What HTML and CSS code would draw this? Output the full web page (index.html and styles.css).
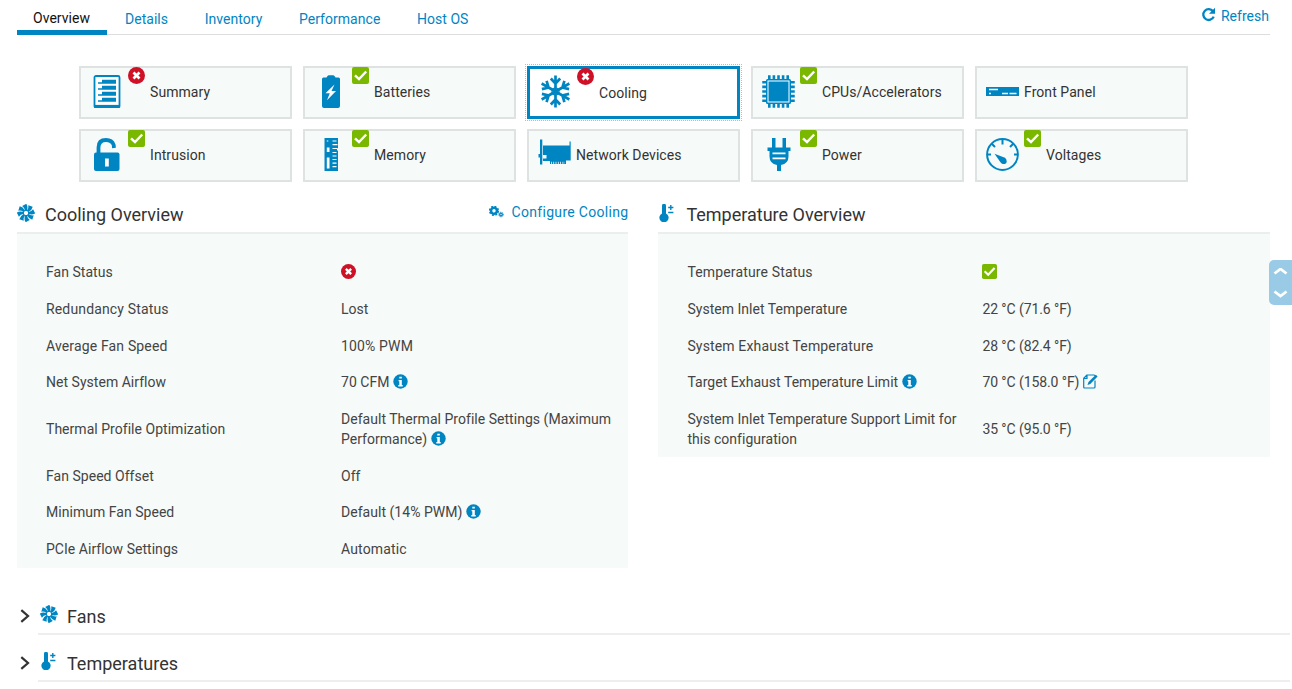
FILE: index.html
```html
<!DOCTYPE html>
<html lang="en">
<head>
<meta charset="utf-8">
<title>System - Cooling</title>
<link rel="stylesheet" href="styles.css">
</head>
<body>
<svg class="sprite" width="0" height="0">
  <symbol id="error" viewBox="0 0 17 17"><circle cx="8.5" cy="8.5" r="8.5" fill="#ce1126"/><path d="M5.5 5.5l6 6M11.5 5.5l-6 6" stroke="#fff" stroke-width="2.7"/></symbol>
  <symbol id="ok" viewBox="0 0 17 17"><rect width="17" height="17" rx="2" fill="#7ab800"/><path d="M3 8.3l4 3.8 7.2-7.6" fill="none" stroke="#fff" stroke-width="2.4"/></symbol>
  <symbol id="info" viewBox="0 0 15 15"><circle cx="7.5" cy="7.5" r="7.2" fill="#0085c3"/><path d="M6.3 2.8h2.5v1.8H6.3zM5.6 6h3.2v5h.9v1.4H5.3V11h1V7.3h-.7z" fill="#fff"/></symbol>
  <symbol id="fan" viewBox="0 0 18 18">
    <g fill="#0085c3">
      <path id="blade" d="M7.900 6.400Q7.600 3.500 5.200 1.900L9.300-.2Q11.200 2.500 10 6.400z"/>
      <use href="#blade" transform="rotate(45 9 9)"/><use href="#blade" transform="rotate(90 9 9)"/><use href="#blade" transform="rotate(135 9 9)"/><use href="#blade" transform="rotate(180 9 9)"/><use href="#blade" transform="rotate(225 9 9)"/><use href="#blade" transform="rotate(270 9 9)"/><use href="#blade" transform="rotate(315 9 9)"/>
    </g>
    <circle cx="9" cy="9" r="2.700" fill="none" stroke="#0085c3" stroke-width="1"/>
  </symbol>
  <symbol id="thermo" viewBox="0 0 18 18"><path d="M4 1.700a2 2 0 0 1 4 0v7.800a4.600 4.600 0 1 1-4 0z" fill="#0085c3"/><path d="M10.200 3.500h5.200M12.800 1v5M10.200 8.500h5.200" stroke="#0085c3" stroke-width="1.400"/></symbol>
  <symbol id="chevron" viewBox="0 0 10 14"><path d="M1.300 1.200L8 7l-6.700 5.800" fill="none" stroke="#333" stroke-width="2.200"/></symbol>
</svg>

<div class="page">
  <header class="topbar">
    <nav class="tabs">
      <a class="tab active">Overview</a><a class="tab">Details</a><a class="tab">Inventory</a><a class="tab">Performance</a><a class="tab">Host OS</a>
    </nav>
    <a class="refresh"><svg width="15" height="15" viewBox="0 0 15 15"><path d="M12 4.300A5.400 5.400 0 1 0 12.700 9.600" fill="none" stroke="#0085c3" stroke-width="2.300"/><path d="M14 .7v6H8z" fill="#0085c3"/></svg><span>Refresh</span></a>
  </header>

  <section class="cards">
    <a class="card"><svg class="pic" viewBox="0 0 33 33"><rect x="4.500" y="1" width="25" height="31.500" rx="1.500" fill="#fff" stroke="#0085c3" stroke-width="1.800"/><path d="M4 31.300h26" stroke="#0085c3" stroke-width="2.800"/><path d="M12 4.800H26V8.800H8V7.300h4zM12 10.800H26V14.800H8V13.300h4zM12 16.800H26V20.800H8V19.300h4zM12 22.800H26V26.800H8V25.300h4z" fill="#0085c3"/></svg><svg class="badge"><use href="#error"/></svg><span>Summary</span></a>
    <a class="card"><svg class="pic" viewBox="0 0 33 33"><path d="M9.500 2.500h3l1-1.500q.5-.8 1.300-.8h4.400q.8 0 1.300.8l1 1.500h3q1.500 0 1.500 1.500v27q0 2-2 2H10q-2 0-2-2V4q0-1.500 1.500-1.500z" fill="#0085c3"/><path d="M20.500 9.500l-9 8.800h4.300l-2.800 7 9-9.300h-4.500z" fill="#fff"/></svg><svg class="badge"><use href="#ok"/></svg><span>Batteries</span></a>
    <a class="card selected"><svg class="pic" viewBox="0 0 33 33"><g fill="none" stroke="#0085c3" stroke-width="2.700"><g id="arm"><path d="M16.500 16.500V.5M11.800 3.500l4.700 5 4.700-5"/></g><use href="#arm" transform="rotate(60 16.500 16.500)"/><use href="#arm" transform="rotate(120 16.500 16.500)"/><use href="#arm" transform="rotate(180 16.500 16.500)"/><use href="#arm" transform="rotate(240 16.500 16.500)"/><use href="#arm" transform="rotate(300 16.500 16.500)"/><circle cx="16.500" cy="16.500" r="3.500" stroke-width="1.200"/></g></svg><svg class="badge"><use href="#error"/></svg><span>Cooling</span></a>
    <a class="card"><svg class="pic" viewBox="0 0 33 33"><rect x="4" y="4" width="25" height="25" rx="1.500" fill="#0085c3"/><rect x="6" y="6" width="21" height="21" fill="none" stroke="#fff" stroke-width="1"/><path d="M6 2.500h22M6 30.500h22" stroke="#0085c3" stroke-width="4.500" stroke-dasharray="2.600 2"/><path d="M2.500 6v22M30.500 6v22" stroke="#0085c3" stroke-width="4.500" stroke-dasharray="2.600 2"/></svg><svg class="badge"><use href="#ok"/></svg><span>CPUs/Accelerators</span></a>
    <a class="card"><svg class="pic" viewBox="0 0 33 33"><path d="M0 12h33v9H0z" fill="#0085c3"/><path d="M3 14.500h9M16 18.500h6M23.500 18.500h7M3 18.500h2" stroke="#fff" stroke-width="1.300"/></svg><span>Front Panel</span></a>

    <a class="card"><svg class="pic" viewBox="0 0 33 33"><path d="M8.500 15V9.500Q8.500 2 16 2q6 0 7.700 5l.3 3" fill="none" stroke="#0085c3" stroke-width="3.800"/><rect x="4" y="14.500" width="25.500" height="18.500" rx="2" fill="#0085c3"/><path d="M15 20.500h3.800v8H15z" fill="#fff"/></svg><svg class="badge"><use href="#ok"/></svg><span>Intrusion</span></a>
    <a class="card"><svg class="pic" viewBox="0 0 33 33"><path d="M10.500 0h13.500v10.500h-1v2h1V33H10.500z" fill="#0085c3"/><path d="M12.800 2.500h1.500v1h-1.500zM12.800 9.500h2.700v4.500h-2.700zM12.800 19.500h2.700v11h-2.700z" fill="#fff"/><path d="M18.500 3h4M18.500 6.700h5M18.500 10.500h5M18.500 14.500h4M18.500 18h4M18.500 21.500h4M18.500 25.200h4M18.500 28.700h4" stroke="#fff" stroke-width="1.200"/></svg><svg class="badge"><use href="#ok"/></svg><span>Memory</span></a>
    <a class="card"><svg class="pic net" viewBox="0 0 33 33"><path d="M2 2.500h2.300v25H2zM.5 17H4v3.500H.5zM5 8.500h26.500V4.500h1.200v19H28V27H12v-3H5v-2.500h3.500V18H5z" fill="#0085c3"/><path d="M13 26h14" stroke="#f6faf8" stroke-width="2.500" stroke-dasharray=".8 1.500"/></svg><span>Network Devices</span></a>
    <a class="card"><svg class="pic" viewBox="0 0 33 33"><path d="M10 0h3.500v9.500h7V0H24v9.500h4.500v3.500h-2v5.500q0 7-7.500 8.500v6h-4v-6q-7.500-1.500-7.500-8.500V13h-2V9.500H10z" fill="#0085c3"/><path d="M10.500 15.300h13M10.500 20.300h13" stroke="#fff" stroke-width="1.800"/></svg><svg class="badge"><use href="#ok"/></svg><span>Power</span></a>
    <a class="card"><svg class="pic" viewBox="0 0 33 33"><g fill="none" stroke="#0085c3" stroke-width="2"><circle cx="16.500" cy="16.500" r="15.400"/><path d="M16.500 1v5.500M1 16.500h4M28 16.500h4M5.500 5.500L9 9M27.500 5.500L24 9"/></g><path d="M8.500 15.800l8.500 3.200a4 4 0 0 1 2.800 6.500 4 4 0 0 1-5.500-1.500z" fill="#0085c3"/></svg><svg class="badge"><use href="#ok"/></svg><span>Voltages</span></a>
  </section>

  <main class="panels">
    <section class="panel">
      <div class="panel-head"><svg class="icon"><use href="#fan"/></svg><h2>Cooling Overview</h2><a class="configure"><svg width="15" height="12" viewBox="0 0 15 12"><circle cx="5" cy="4.800" r="3" fill="none" stroke="#0085c3" stroke-width="2.600"/><circle cx="5" cy="4.800" r="4.500" fill="none" stroke="#0085c3" stroke-width="1.300" stroke-dasharray="1.900 1.630"/><circle cx="12" cy="8.500" r="1.300" fill="none" stroke="#0085c3" stroke-width="1.300"/><circle cx="12" cy="8.500" r="2.300" fill="none" stroke="#0085c3" stroke-width="1" stroke-dasharray="1 .800"/></svg><span>Configure Cooling</span></a></div>
      <dl class="facts">
        <div class="fact"><dt>Fan Status</dt><dd><svg class="mini"><use href="#error"/></svg></dd></div>
        <div class="fact"><dt class="wide">Redundancy Status</dt><dd>Lost</dd></div>
        <div class="fact"><dt class="wide">Average Fan Speed</dt><dd class="wide">100% PWM</dd></div>
        <div class="fact"><dt>Net System Airflow</dt><dd>70 CFM <svg class="mini"><use href="#info"/></svg></dd></div>
        <div class="fact"><dt>Thermal Profile Optimization</dt><dd>Default Thermal Profile Settings (Maximum<br>Performance) <svg class="mini"><use href="#info"/></svg></dd></div>
        <div class="fact"><dt>Fan Speed Offset</dt><dd>Off</dd></div>
        <div class="fact"><dt>Minimum Fan Speed</dt><dd>Default (14% PWM) <svg class="mini"><use href="#info"/></svg></dd></div>
        <div class="fact"><dt>PCIe Airflow Settings</dt><dd class="wide">Automatic</dd></div>
      </dl>
    </section>
    <section class="panel">
      <div class="panel-head"><svg class="icon"><use href="#thermo"/></svg><h2>Temperature Overview</h2></div>
      <dl class="facts">
        <div class="fact"><dt class="wide">Temperature Status</dt><dd><svg class="mini"><use href="#ok"/></svg></dd></div>
        <div class="fact"><dt>System Inlet Temperature</dt><dd class="reading">22 °C (71.6 °F)</dd></div>
        <div class="fact"><dt class="wide">System Exhaust Temperature</dt><dd class="reading">28 °C (82.4 °F)</dd></div>
        <div class="fact"><dt>Target Exhaust Temperature Limit <svg class="mini"><use href="#info"/></svg></dt><dd class="reading">70 °C (158.0 °F) <svg class="mini" viewBox="0 0 15 15"><path d="M12 6.500v6.500q0 1-1 1H1.700q-1 0-1-1V4.200L3.800 1H11q1 0 1 1M4 1v3.300H.8" fill="none" stroke="#0085c3" stroke-width="1.200"/><path d="M4.500 11l1-3L12.800.8l1.800 1.700L7.300 9.900z" fill="#0085c3"/></svg></dd></div>
        <div class="fact"><dt>System Inlet Temperature Support Limit for<br>this configuration</dt><dd class="reading">35 °C (95.0 °F)</dd></div>
      </dl>
    </section>
  </main>

  <section class="accordions">
    <div class="accordion"><svg class="chev"><use href="#chevron"/></svg><div class="acc-head"><svg class="icon"><use href="#fan"/></svg><h2>Fans</h2></div></div>
    <div class="accordion"><svg class="chev"><use href="#chevron"/></svg><div class="acc-head"><svg class="icon"><use href="#thermo"/></svg><h2>Temperatures</h2></div></div>
  </section>
</div>

<div class="scroller"><svg width="15" height="30" viewBox="0 0 15 30"><path d="M1.500 5.500l6-4.500 6 4.500M1.500 23.500l6 4.500 6-4.500" fill="none" stroke="#fff" stroke-width="2.800"/></svg></div>
</body>
</html>
```
FILE: styles.css
```css
* { box-sizing: border-box; }
body { margin: 0; width: 1292px; height: 689px; overflow: hidden; background: #fff; color: #444; font: 14px/20px Roboto, sans-serif; letter-spacing: .03px; }
.sprite { position: absolute; }
svg { flex: none; }
h2 { margin: 0; font-size: 18px; font-weight: 400; line-height: 24px; letter-spacing: 0; color: #333; white-space: nowrap; }
.page { padding-left: 17px; }

.topbar { display: flex; justify-content: space-between; width: 1253px; height: 35px; border-bottom: 1px solid #ddd; }
.tabs { display: flex; height: 35px; color: #0085c3; }
.tab { padding-top: 9px; margin-right: 36.700px; }
.tab.active { width: 90px; margin-right: 18px; padding: 8px 0 0 16px; color: #111; border-bottom: 5px solid #0085c3; }
.refresh { display: flex; gap: 5px; padding: 6px 1px 0 0; color: #0085c3; }
.refresh svg { margin-top: 1px; }

.cards { display: grid; grid-template-columns: repeat(5, 213px); grid-auto-rows: 53px; gap: 10px 11px; padding: 31px 0 0 62px; color: #333; }
.card { display: flex; align-items: center; padding-left: 9px; background: #f6faf8; border: 2px solid #dee3e1; white-space: nowrap; }
.card span { margin: -2px 0 0 5px; letter-spacing: .07px; }
.pic { width: 33px; height: 33px; margin-top: -3px; }
.net { margin-top: -4px; }
.badge { width: 17px; height: 17px; align-self: flex-start; margin: -1px 0 0 5px; }
.selected { background: #fff; border: 3px solid #0085c3; outline: 1px dotted #bbb; outline-offset: 1px; padding-left: 9px; padding-top: 1px; }
.selected .badge { margin-top: -2px; }
.selected span { margin-top: 0; }

.panels { display: flex; gap: 30px; padding-top: 17px; align-items: flex-start; }
.panel { width: 611.400px; }
.panel-head { display: flex; height: 35px; padding-top: 3px; border-bottom: 2px solid #eaeeec; }
.icon { width: 18px; height: 18px; margin-right: 10px; }
.panel-head .icon { margin-top: 2px; }
.panel-head h2 { padding-top: 1px; }
.configure { display: flex; gap: 8px; margin-left: auto; color: #0085c3; letter-spacing: .3px; white-space: nowrap; }
.configure svg { margin-top: 4px; }
.facts { margin: 0; padding: 20px 0 0 29px; background: #f6faf8; }
.fact { display: flex; align-items: center; padding: 8.350px 0; white-space: nowrap; }
.fact dt { width: 295px; }
.fact dd { margin: 0; }
.fact .wide { letter-spacing: .15px; }
.reading { letter-spacing: -.08px; }
.mini { width: 15px; height: 15px; vertical-align: -2px; }

.accordions { padding-top: 26.500px; }
.accordion { display: flex; height: 47px; }
.chev { width: 10px; height: 14px; margin: 15px 8px 0 3px; }
.acc-head { display: flex; width: 1252px; height: 41px; padding: 11px 0 0 2px; border-bottom: 2px solid #eee; }
.acc-head .icon { width: 18px; margin-right: 9px; }

.scroller { position: absolute; left: 1269px; top: 260px; width: 23px; height: 45px; padding: 8px 0 0 4px; background: #9acbe6; border-radius: 5px 0 0 5px; }
```
